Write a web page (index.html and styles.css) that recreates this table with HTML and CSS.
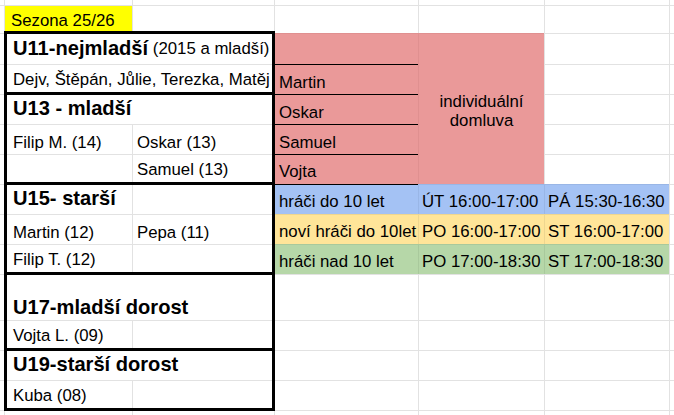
FILE: index.html
```html
<!DOCTYPE html>
<html lang="cs">
<head>
<meta charset="utf-8">
<title>Sezona 25/26</title>
<link rel="stylesheet" href="styles.css">
</head>
<body>
<div class="sheet">
  <!-- row 0 (partial) -->
  <div class="c g top"></div><div class="c ca top"></div><div class="c cb top"></div><div class="c cc top"></div><div class="c cd top"></div><div class="c ce top"></div><div class="c cf top"></div>

  <!-- Sezona -->
  <div class="c g"></div>
  <div class="c ca sez">Sezona 25/26</div>
  <div class="c cb"></div><div class="c cc"></div><div class="c cd"></div><div class="c ce"></div><div class="c cf"></div>

  <!-- U11 -->
  <div class="c g"></div>
  <div class="grp u11">
    <div class="c w2 pa hd"><span class="b">U11-nejmladší</span>&nbsp;(2015 a mladší)</div>
    <div class="c w2 pa thick">Dejv, Štěpán, Jůlie, Terezka, Matěj</div>
  </div>
  <div class="c cc pink"></div>
  <div class="c cd pink merged">individuální<br>domluva</div>
  <div class="c ce"></div><div class="c cf"></div>

  <div class="c g"></div>
  <div class="c cc pink bl">Martin</div>
  <div class="c ce"></div><div class="c cf"></div>

  <!-- U13 -->
  <div class="c g"></div>
  <div class="grp u13">
    <div class="c w2 pa hd"><span class="b">U13 - mladší</span></div>
    <div class="c pa">Filip M. (14)</div>
    <div class="c pb">Oskar (13)</div>
    <div class="c pa thick"></div>
    <div class="c pb thick">Samuel (13)</div>
  </div>
  <div class="c cc pink bl">Oskar</div>
  <div class="c ce"></div><div class="c cf"></div>

  <div class="c g"></div>
  <div class="c cc pink bl">Samuel</div>
  <div class="c ce"></div><div class="c cf"></div>

  <div class="c g"></div>
  <div class="c cc pink bl lo">Vojta</div>
  <div class="c ce"></div><div class="c cf"></div>

  <!-- U15 -->
  <div class="c g"></div>
  <div class="grp u15">
    <div class="c pa hd"><span class="b">U15- starší</span></div>
    <div class="c pb hd"></div>
    <div class="c pa">Martin (12)</div>
    <div class="c pb">Pepa (11)</div>
    <div class="c pa thick">Filip T. (12)</div>
    <div class="c pb thick"></div>
  </div>
  <div class="c cc blue bl lo">hráči do 10 let</div>
  <div class="c cd blue lo">ÚT 16:00-17:00</div>
  <div class="c ce blue lo">PÁ 15:30-16:30</div>
  <div class="c cf"></div>

  <div class="c g"></div>
  <div class="c cc yellow lo">noví hráči do 10let</div>
  <div class="c cd yellow lo">PO 16:00-17:00</div>
  <div class="c ce yellow lo">ST 16:00-17:00</div>
  <div class="c cf"></div>

  <div class="c g"></div>
  <div class="c cc green lo">hráči nad 10 let</div>
  <div class="c cd green lo">PO 17:00-18:30</div>
  <div class="c ce green lo">ST 17:00-18:30</div>
  <div class="c cf"></div>

  <!-- U17 -->
  <div class="c g"></div>
  <div class="grp u17">
    <div class="c w2 pa hd low"><span class="b">U17-mladší dorost</span></div>
    <div class="c pa thick">Vojta L. (09)</div>
    <div class="c pb thick"></div>
  </div>
  <div class="c cc"></div><div class="c cd"></div><div class="c ce"></div><div class="c cf"></div>

  <div class="c g"></div>
  <div class="c cc"></div><div class="c cd"></div><div class="c ce"></div><div class="c cf"></div>

  <!-- U19 -->
  <div class="c g"></div>
  <div class="grp u19">
    <div class="c w2 pa hd"><span class="b">U19-starší dorost</span></div>
    <div class="c pa thick">Kuba (08)</div>
    <div class="c pb thick"></div>
  </div>
  <div class="c cc"></div><div class="c cd"></div><div class="c ce"></div><div class="c cf"></div>

  <div class="c g"></div>
  <div class="c cc"></div><div class="c cd"></div><div class="c ce"></div><div class="c cf"></div>

  <!-- bottom partial row -->
  <div class="c g"></div><div class="c ca"></div><div class="c cb"></div><div class="c cc"></div><div class="c cd"></div><div class="c ce"></div><div class="c cf"></div>
</div>
</body>
</html>
```

FILE: styles.css
```css
html, body {
  margin: 0;
  padding: 0;
  background: #ffffff;
  overflow: hidden;
}

.sheet {
  display: grid;
  grid-template-columns: 4px 128px 142px 144px 126px 125px 5px;
  grid-template-rows: 5px 28px 31px repeat(7, 30px) 46px 30px 30px 30px 5px;
  width: 674px;
  height: 415px;
  font-family: "Liberation Sans", Arial, sans-serif;
  font-size: 16.8px;
  color: #000;
}

.c {
  box-sizing: border-box;
  border-top: 1px solid #e2e2e2;
  border-left: 1px solid #e2e2e2;
  display: flex;
  align-items: flex-end;
  white-space: nowrap;
  line-height: 19px;
  padding: 0 0 2px 4px;
  min-width: 0;
}

.top { border-top: 0; }

.g { grid-column: 1; border-left: 0; padding: 0; }
.ca { grid-column: 2; }
.cb { grid-column: 3; }
.cc { grid-column: 4; }
.cd { grid-column: 5; padding-left: 3px; }
.ce { grid-column: 6; padding-left: 3px; }
.cf { grid-column: 7; padding: 0; }

.sez {
  background: #ffff00;
  padding-left: 6px;
  padding-bottom: 3px;
}

/* groups with thick outer border */
.grp {
  grid-column: 2 / span 2;
  display: grid;
  grid-template-columns: 128px 142px;
  position: relative;
}
.grp::after {
  content: "";
  position: absolute;
  top: -2px;
  left: 0;
  right: -1px;
  bottom: -1px;
  border: 3px solid #000;
  pointer-events: none;
  z-index: 2;
}
.u11 { grid-row: span 2; grid-template-rows: 31px 30px; }
.u13 { grid-row: span 3; grid-template-rows: 30px 30px 30px; }
.u15 { grid-row: span 3; grid-template-rows: 30px 30px 30px; }
.u17 { grid-row: span 2; grid-template-rows: 46px 30px; }
.u19 { grid-row: span 2; grid-template-rows: 30px 30px; }

.w2 { grid-column: span 2; }
.pa { padding-left: 8px; }
.pb { padding-left: 4px; }
.thick { padding-bottom: 5px; }

.hd {
  line-height: 23px;
  padding-bottom: 4px;
}
.hd.low { padding-bottom: 1px; }
.b {
  font-weight: bold;
  font-size: 20.1px;
}

/* coloured cells */
.pink {
  background: #ea9999;
  border-top-color: #e09090;
  border-left-color: #e09090;
}
.pink.bl, .blue.bl { border-top-color: #000; }
.blue {
  background: #a4c2f4;
  border-top-color: #99b6e6;
  border-left-color: #99b6e6;
}
.yellow {
  background: #ffe599;
  border-top-color: #eed690;
  border-left-color: #eed690;
}
.green {
  background: #b6d7a8;
  border-top-color: #a9c99c;
  border-left-color: #a9c99c;
}
.lo { padding-bottom: 3px; }

.merged {
  grid-row: span 5;
  align-items: center;
  justify-content: center;
  text-align: center;
  white-space: normal;
  padding: 3px 0 0 0;
}
```
